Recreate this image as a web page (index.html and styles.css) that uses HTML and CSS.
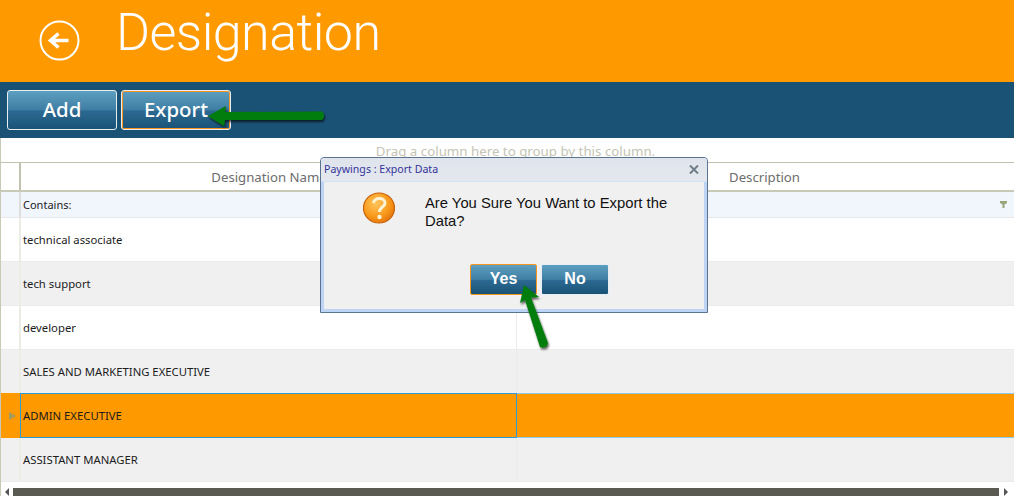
FILE: index.html
```html
<!DOCTYPE html>
<html lang="en">
<head>
<meta charset="utf-8">
<title>Designation</title>
<link rel="stylesheet" href="styles.css">
</head>
<body>
<div class="page">
  <header class="header">
    <svg class="back" width="42" height="42" viewBox="0 0 42 42">
      <circle cx="20.500" cy="20.500" r="19" fill="none" stroke="#fff" stroke-width="2"/>
      <path d="M29.500 20.500H12M19.500 13.500L11.500 20.500L19.500 27.500" fill="none" stroke="#fff" stroke-width="3.500"/>
    </svg>
    <h1 class="title">Designation</h1>
  </header>
  <nav class="toolbar">
    <button class="tool-btn">Add</button>
    <button class="tool-btn focused">Export</button>
  </nav>
  <main class="grid">
    <div class="group-panel">Drag a column here to group by this column.</div>
    <div class="row head">
      <div class="ind"></div>
      <div class="c1">Designation Name</div>
      <div class="c2">Description</div>
    </div>
    <div class="row filter">
      <div class="ind"></div>
      <div class="c1">Contains:</div>
      <div class="c2">
        <svg class="funnel" width="7" height="7" viewBox="0 0 7 7"><path d="M0 0H7V2L4.500 3.500V7H2.500V3.500L0 2Z" fill="#9aa67a"/></svg>
      </div>
    </div>
    <div class="row data"><div class="ind"></div><div class="c1">technical associate</div><div class="c2"></div></div>
    <div class="row data alt"><div class="ind"></div><div class="c1">tech support</div><div class="c2"></div></div>
    <div class="row data"><div class="ind"></div><div class="c1">developer</div><div class="c2"></div></div>
    <div class="row data alt"><div class="ind"></div><div class="c1">SALES AND MARKETING EXECUTIVE</div><div class="c2"></div></div>
    <div class="row data selected">
      <div class="ind"><span class="caret"></span></div>
      <div class="c1">ADMIN EXECUTIVE</div>
      <div class="c2"></div>
    </div>
    <div class="row data alt"><div class="ind"></div><div class="c1">ASSISTANT MANAGER</div><div class="c2"></div></div>
    <div class="scroll">
      <span class="sarrow left"></span>
      <div class="thumb"></div>
      <span class="sarrow right"></span>
    </div>
  </main>

  <section class="dialog">
    <div class="dlg-title">
      <span>Paywings : Export Data</span>
      <svg width="10" height="9" viewBox="0 0 10 9"><path d="M1 0.500L9 8.500M9 0.500L1 8.500" stroke="#727d8a" stroke-width="2" fill="none"/></svg>
    </div>
    <div class="dlg-body">
      <div class="dlg-msg">
        <svg class="q" width="34" height="32" viewBox="0 0 34 32">
          <defs>
            <radialGradient id="qg" cx="0.400" cy="0.350" r="0.750">
              <stop offset="0" stop-color="#ffc65c"/>
              <stop offset="0.600" stop-color="#f8981a"/>
              <stop offset="1" stop-color="#e06a08"/>
            </radialGradient>
          </defs>
          <ellipse cx="17" cy="16" rx="15.500" ry="15" fill="url(#qg)" stroke="#c9620a" stroke-width="1.200"/>
          <path d="M11.500 11C12 5 23 5 23 11C23 15 17.500 15 17.500 20" fill="none" stroke="#fff3d6" stroke-width="3"/>
          <circle cx="17.500" cy="25" r="2.200" fill="#fff3d6"/>
        </svg>
        <p class="msg">Are You Sure You Want to Export the Data?</p>
      </div>
      <div class="dlg-actions">
        <button class="dlg-btn focused">Yes</button>
        <button class="dlg-btn">No</button>
      </div>
    </div>
  </section>

  <svg class="arrows" width="1014" height="496" viewBox="0 0 1014 496">
    <defs>
      <filter id="sh" x="-20%" y="-20%" width="140%" height="140%">
        <feDropShadow dx="1" dy="2" stdDeviation="1" flood-color="#000" flood-opacity="0.650"/>
      </filter>
    </defs>
    <g filter="url(#sh)" fill="#067d0c">
      <path d="M208 116L226 106L225 112L322 111.500Q326 115.500 322 120L225 120L224 126Z"/>
      <path d="M524 285L539 297L531 297.500L548 343Q547 349 540 347L525 300L520 303Z"/>
    </g>
  </svg>
</div>
</body>
</html>
```

FILE: styles.css
```css
* { box-sizing: border-box; }
html, body { margin: 0; padding: 0; }
body { font-family: "Noto Sans", "Open Sans", "Liberation Sans", sans-serif; background: #fff; overflow: hidden; }
.page { position: relative; width: 1014px; height: 496px; overflow: hidden; }

.header { height: 82px; background: #ff9900; display: flex; align-items: flex-start; padding-left: 39px; }
.back { margin-top: 20px; flex: none; }
.title { margin: 2px 0 0 35px; font: 300 52px/61px Roboto, "Open Sans", sans-serif; letter-spacing: -0.550px; color: #fff; }

.toolbar { height: 56px; background: #1a5276; display: flex; gap: 4px; padding: 8px 0 0 7px; }
.tool-btn {
  width: 110px; height: 40px; padding: 0 0 2px; border: 1px solid #e8eef2; border-radius: 3px;
  color: #fff; font: 500 20.400px "Noto Sans", "Open Sans", sans-serif;
  background: linear-gradient(#5d9fc0 0, #3f7ea3 50%, #2c6a93 52%, #1a5276 100%);
}
.tool-btn.focused { box-shadow: inset 0 0 0 1px #f7941d; }

.grid { height: 358px; border-left: 1px solid #c9c9b8; display: flex; flex-direction: column; }
.group-panel { height: 24px; line-height: 27px; padding-left: 16px; text-align: center; color: #c4c4b4; font-size: 13.300px; }
.row { display: flex; }
.ind { width: 20px; flex: none; border-right: 2px solid #ecece6; display: flex; align-items: center; padding-left: 8px; }
.c1 { width: 496px; flex: none; padding-left: 2px; display: flex; align-items: center; }
.c2 { flex: 1; display: flex; align-items: center; }

.head { height: 30px; border-top: 1px solid #c2c2b0; border-bottom: 2px solid #c9c9b8; color: #6d6d6d; font-size: 13.200px; }
.head .ind { border-right-color: #c2c2b0; }
.head .c1 { justify-content: center; padding-left: 0; }
.head .c2 { justify-content: center; padding-right: 2px; }
.filter { height: 26px; background: #f1f6fd; border-bottom: 1px solid #e8e8e8; font-size: 11px; color: #222; }
.filter .ind { border-right-color: #dddddd; }
.filter .c2 { justify-content: flex-end; padding-right: 7px; }
.data { height: 44px; border-bottom: 1px solid #ebebeb; font-size: 11.300px; color: #1c1c1c; background: #fff; }
.data .c1 { border-right: 1px solid #ebebeb; }
.alt { background: #f0f0f0; }
.selected { background: #ff9900; border-bottom: 0; height: 45px; margin-top: -1px; position: relative; }
.selected .ind { border-right: 0; width: 19px; }
.selected .c1 { width: 497px; border: 1px solid #2f9bd6; padding-left: 2px; }
.selected .c2 { border-top: 1px solid #8fc8e8; border-bottom: 1px solid #8fc8e8; }
.caret { border-left: 7px solid #a39a5e; border-top: 4.500px solid transparent; border-bottom: 4.500px solid transparent; }

.scroll { margin-top: 6px; height: 8px; display: flex; align-items: center; }
.thumb { flex: 1; height: 8px; background: #5a5a52; margin: 0 5px 0 4px; }
.sarrow { width: 4px; flex: none; border-top: 4px solid transparent; border-bottom: 4px solid transparent; }
.sarrow.left { border-right: 4px solid #555; margin-left: 4px; }
.sarrow.right { border-left: 4px solid #555; margin-right: 6px; }

.dialog {
  position: absolute; left: 320px; top: 157px; width: 388px; height: 156px;
  border: 1px solid #5a7391; border-radius: 4px 4px 0 0; background: #bdd4f4;
  display: flex; flex-direction: column; overflow: hidden;
}
.dlg-title {
  height: 24px; flex: none; background: linear-gradient(#dfe4ec, #e4e7ee); padding: 0 8px 1px 3px;
  display: flex; align-items: center; justify-content: space-between;
  font-size: 10.600px; color: #33339a; border-bottom: 1px solid #d4e2f6;
}
.dlg-body { flex: 1; margin: 0 3px 3px 3px; background: #f0f0f0; display: flex; flex-direction: column; }
.dlg-msg { display: flex; align-items: flex-start; padding: 10px 0 0 38px; height: 82px; flex: none; }
.q { flex: none; }
.msg { margin: 2px 0 0 29px; width: 270px; font: 14.800px/18px "Liberation Sans", Arial, sans-serif; color: #111; }
.dlg-actions { display: flex; gap: 4px; padding-left: 146px; }
.dlg-btn {
  width: 68px; height: 31px; padding: 0 0 1px; border: 1px solid #e6eef4; border-radius: 2px; color: #fff;
  font: 700 16px "Liberation Sans", Arial, sans-serif;
  background: linear-gradient(#5d9fc0 0, #3f7ea3 50%, #2c6a93 52%, #1a5276 100%);
}
.dlg-btn.focused { border-color: #f7941d; width: 67px; }

.arrows { position: absolute; left: 0; top: 0; pointer-events: none; }
```
